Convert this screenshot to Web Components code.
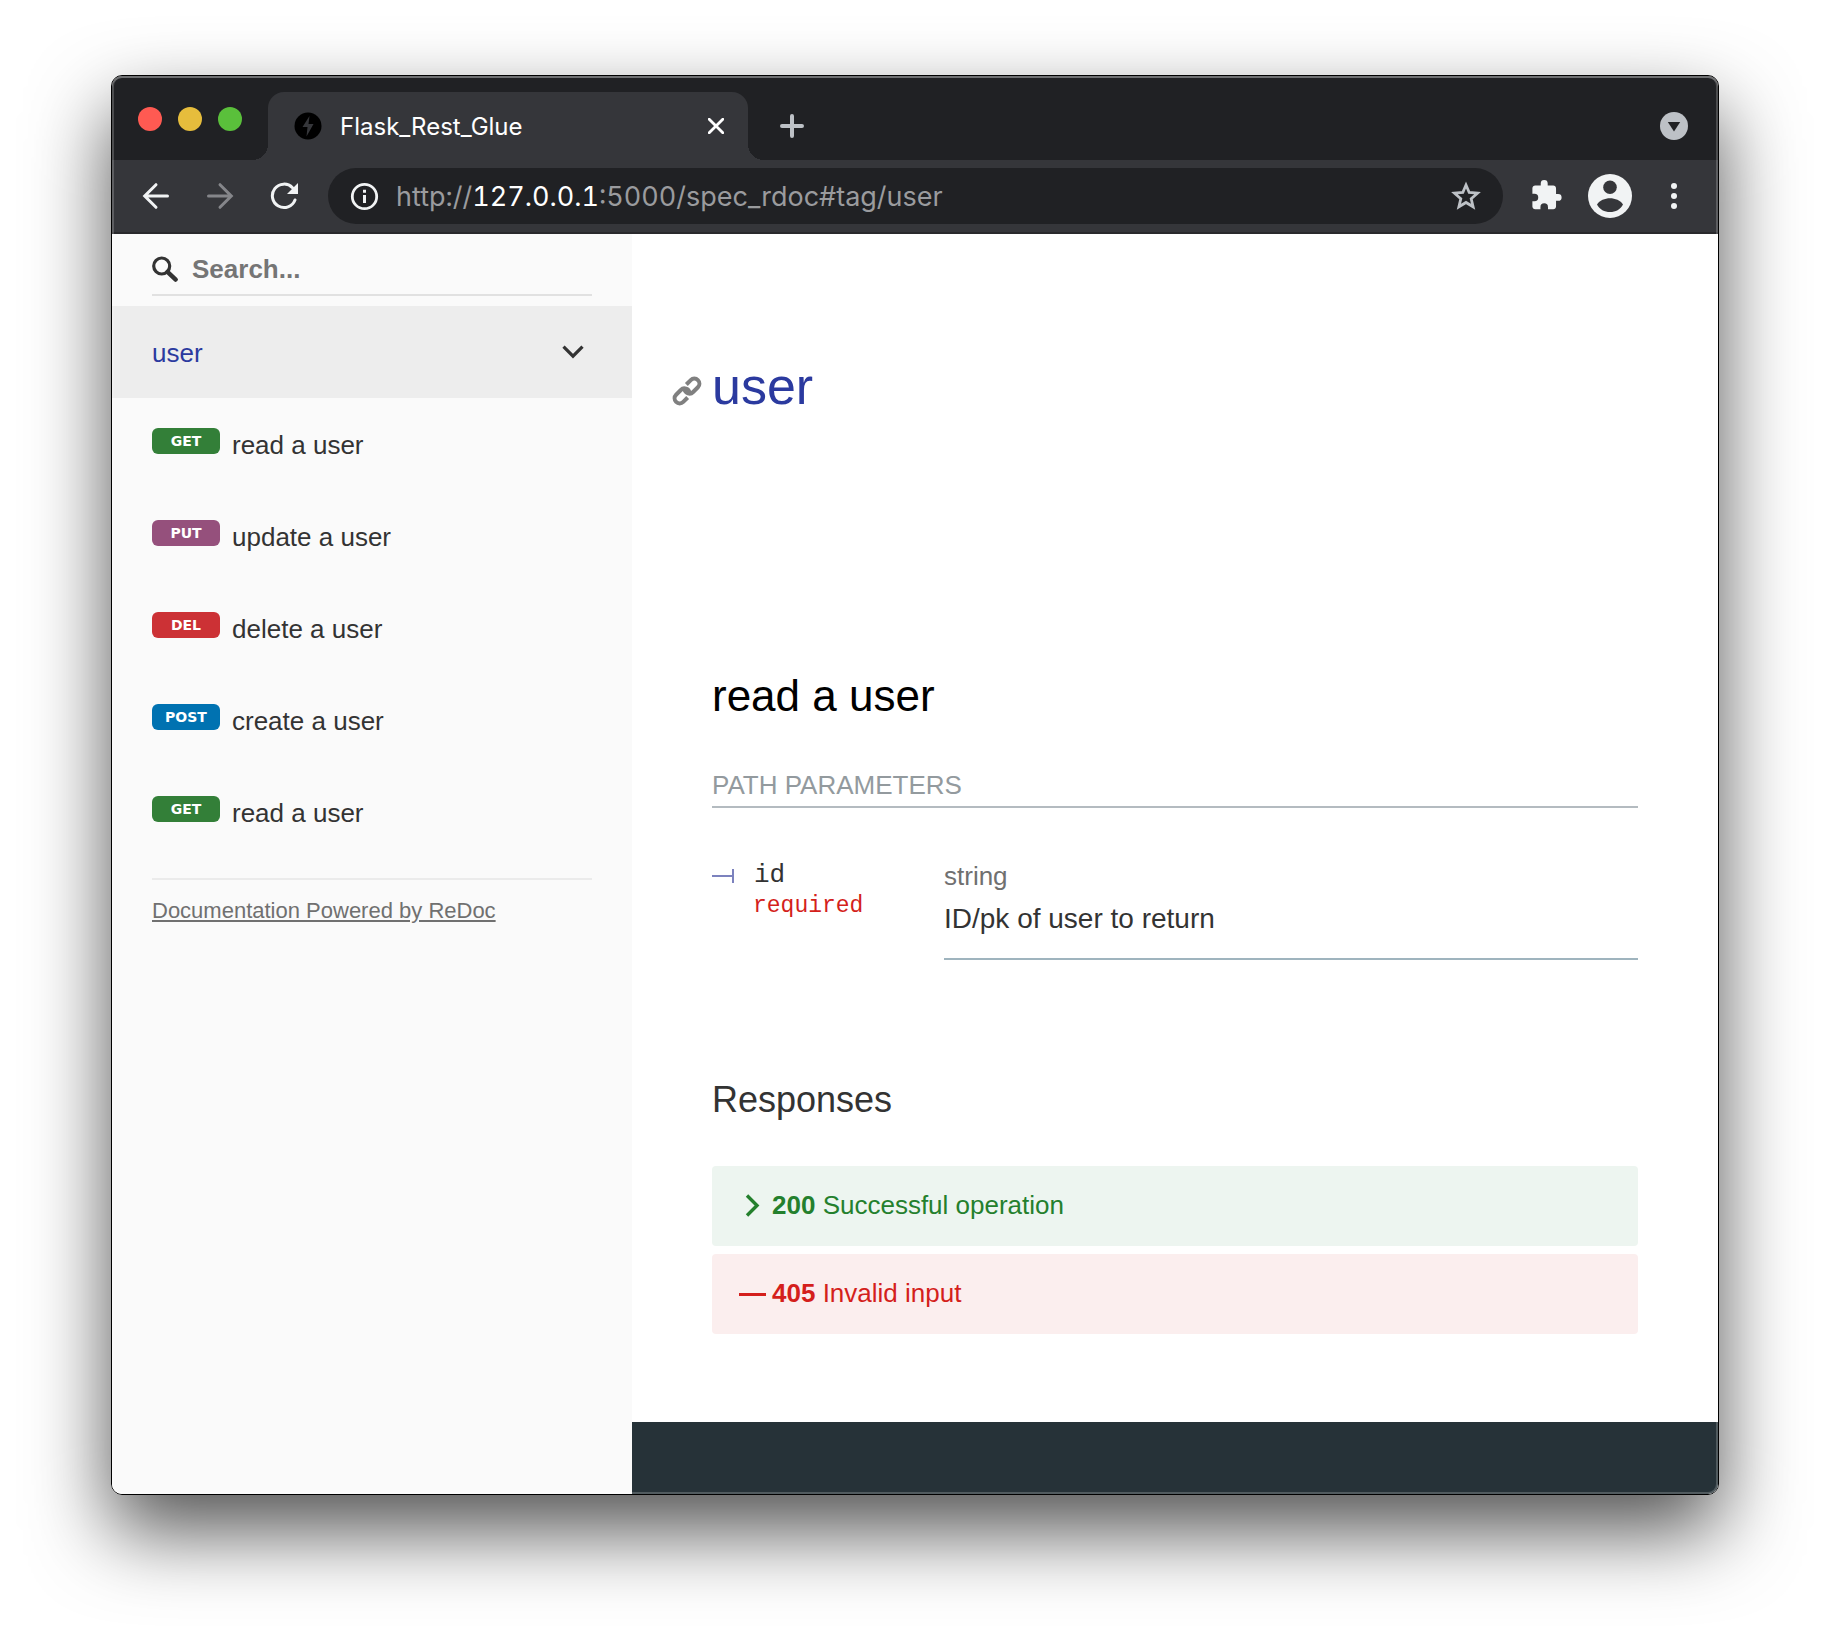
<!DOCTYPE html>
<html lang="en">
<head>
<meta charset="utf-8">
<meta name="viewport" content="width=device-width, initial-scale=1">
<title>Flask_Rest_Glue</title>
<style>
  body { margin: 0; background: #fff; font-family: "Liberation Sans", Arial, sans-serif; }
</style>
</head>
<body>
<browser-window>
  <browser-tabs slot="chrome" label="Flask_Rest_Glue"></browser-tabs>
  <browser-toolbar slot="chrome"></browser-toolbar>
  <doc-sidebar slot="side">
    <menu-entry verb="get">read a user</menu-entry>
    <menu-entry verb="put">update a user</menu-entry>
    <menu-entry verb="del">delete a user</menu-entry>
    <menu-entry verb="post">create a user</menu-entry>
    <menu-entry verb="get">read a user</menu-entry>
  </doc-sidebar>
  <doc-content>
    <response-row slot="responses" kind="ok" code="200">Successful operation</response-row>
    <response-row slot="responses" kind="error" code="405">Invalid input</response-row>
  </doc-content>
</browser-window>

<script>
function define(name, render) {
  customElements.define(name, class extends HTMLElement {
    constructor() {
      super();
      this.attachShadow({ mode: 'open' });
    }
    connectedCallback() {
      this.shadowRoot.innerHTML = '<style>*{box-sizing:border-box}svg{display:block;flex:none}button{border:0;padding:0;background:none;font:inherit;color:inherit;cursor:pointer}</style>' + render(this);
    }
  });
}

define('browser-window', () => `
<style>
  :host { display: flex; box-sizing: border-box; min-height: 100vh; padding: 75px 111px 147px; }
  .window { position: relative; flex: 1; min-width: 0; display: flex; flex-direction: column; overflow: hidden;
    border: 1px solid #000; border-radius: 11px; background: #fff; }
  .shade { flex: 1; min-width: 0; display: flex; border-radius: 11px;
    box-shadow: 0 36px 80px rgba(0,0,0,.68); }
  .rim { position: absolute; inset: 0; border-radius: 10px; pointer-events: none;
    box-shadow: inset 0 2px 0 rgba(255,255,255,.2), inset 0 0 0 2px rgba(255,255,255,.2); }
  .page { flex: 1; display: flex; }
</style>
<div class="shade"><div class="window">
  <slot name="chrome"></slot>
  <div class="page"><slot name="side"></slot><slot></slot></div>
  <div class="rim"></div>
</div></div>`);

define('browser-tabs', el => `
<style>
  :host { display: flex; align-items: flex-end; height: 84px; background: #202124; color: #fff; font: 24px Inter, sans-serif; }
  .lights { display: flex; gap: 16px; padding: 0 26px 29px 26px; }
  .lights button { width: 24px; height: 24px; border-radius: 50%; background: var(--c); }
  .tab { position: relative; display: flex; align-items: center; width: 480px; height: 68px; padding: 0 24px 0 26px;
    background: #35363a; border-radius: 16px 16px 0 0; }
  .tab::before, .tab::after { content: ""; position: absolute; bottom: 0; width: 16px; height: 16px; }
  .tab::before { right: 100%; background: radial-gradient(circle at 0 0, transparent 16px, #35363a 16px); }
  .tab::after { left: 100%; background: radial-gradient(circle at 100% 0, transparent 16px, #35363a 16px); }
  .title { flex: 1; padding-left: 18px; }
  .new { margin: 0 auto 22px 32px; }
  .more { margin: 0 30px 20px 0; }
</style>
<div class="lights">
  <button aria-label="Close window" style="--c:#ff5a52"></button>
  <button aria-label="Minimise window" style="--c:#e6bd3c"></button>
  <button aria-label="Zoom window" style="--c:#5ac03b"></button>
</div>
<div class="tab">
  <svg width="28" height="28" viewBox="0 0 28 28"><circle cx="14" cy="14" r="13.5" fill="#000"/><path d="M15.5 4 8.5 15h5l-1 9.5L19.500 12h-5z" fill="#35363a"/></svg>
  <span class="title">${el.getAttribute('label')}</span>
  <button aria-label="Close tab"><svg width="16" height="16" viewBox="0 0 16 16"><path d="m1.200 1.200 13.600 13.600M14.800 1.200 1.200 14.800" stroke="#fff" stroke-width="2.800" stroke-linecap="round"/></svg></button>
</div>
<button class="new" aria-label="New tab"><svg width="24" height="24" viewBox="0 0 24 24"><path d="M12 2v20M2 12h20" stroke="#bdc1c6" stroke-width="4" stroke-linecap="round"/></svg></button>
<button class="more" aria-label="Search tabs"><svg width="28" height="28" viewBox="0 0 28 28"><circle cx="14" cy="14" r="14" fill="#bdc1c6"/><path d="M7.800 10h12.400L14 19.500z" fill="#202124"/></svg></button>`);

define('browser-toolbar', () => `
<style>
  :host { display: flex; align-items: center; height: 74px; padding: 0 41px 0 30px; background: #35363a; color: #9a9b9e;
    border-bottom: 2px solid #29292c; box-sizing: border-box; font: 27px Inter, sans-serif; font-variant-numeric: tabular-nums; }
  .nav { display: flex; gap: 36px; padding-right: 30px; }
  .bar { flex: 1; min-width: 0; display: flex; align-items: center; height: 56px; padding: 0 21px 0 22px; border-radius: 28px; background: #202124; }
  .url { flex: 1; padding-left: 17px; white-space: nowrap; }
  .url b { font-weight: 400; color: #fff; }
  .tools { display: flex; align-items: center; padding-left: 28px; }
  .tools .me { margin: 0 39px 0 25px; }
</style>
<div class="nav">
  <button aria-label="Back"><svg width="28" height="28" viewBox="0 0 28 28"><path d="M25.500 14H3M14 2.700 2.700 14 14 25.300" fill="none" stroke="#f1f3f4" stroke-width="3" stroke-linecap="round"/></svg></button>
  <button aria-label="Forward"><svg width="28" height="28" viewBox="0 0 28 28"><path d="M2.500 14H25M14 2.700 25.300 14 14 25.300" fill="none" stroke="#85868a" stroke-width="3" stroke-linecap="round"/></svg></button>
  <button aria-label="Reload"><svg width="28" height="28" viewBox="0 0 28 28"><path d="M25 18a11.700 11.700 0 1 1-2.500-12.300" fill="none" stroke="#f1f3f4" stroke-width="3" stroke-linecap="round"/><path d="M28 1v11H17z" fill="#f1f3f4"/></svg></button>
</div>
<div class="bar">
  <svg width="29" height="29" viewBox="0 0 29 29"><circle cx="14.500" cy="14.500" r="12.200" fill="none" stroke="#f1f3f4" stroke-width="2.800"/><path d="M13 13h3v8h-3zM13 7.800h3v3h-3z" fill="#f1f3f4"/></svg>
  <span class="url">http://<b>127.0.0.1</b>:5000/spec_rdoc#tag/user</span>
  <button aria-label="Bookmark this page"><svg width="32" height="32" viewBox="0 0 32 32"><path d="m16 5 3.200 7.500 8.300.7-6.300 5.500 1.900 8.100L16 22.500l-7.100 4.300 1.900-8.100-6.300-5.500 8.300-.7z" fill="none" stroke="#bdc1c6" stroke-width="2.800"/></svg></button>
</div>
<div class="tools">
  <button aria-label="Extensions"><svg width="32" height="32" viewBox="1 1 23 23"><path d="M20.500 11H19V7c0-1.100-.9-2-2-2h-4V3.500a2.500 2.500 0 0 0-5 0V5H4c-1.100 0-2 .9-2 2v3.800h1.500a2.700 2.700 0 0 1 0 5.400H2V20c0 1.100.9 2 2 2h3.800v-1.500a2.700 2.700 0 0 1 5.400 0V22H17c1.100 0 2-.9 2-2v-4h1.500a2.500 2.500 0 0 0 0-5z" fill="#f1f3f4"/></svg></button>
  <button class="me" aria-label="Profile"><svg width="44" height="44" viewBox="0 0 44 44"><circle cx="22" cy="22" r="22" fill="#f1f3f4"/><circle cx="22" cy="13.300" r="6.800" fill="#35363a"/><path d="M9 30.500C11.500 26.500 17 24.300 22 24.300s10.500 2.200 13 6.200C32.500 35.500 27.500 38 22 38S11.500 35.500 9 30.500z" fill="#35363a"/></svg></button>
  <button aria-label="Menu"><svg width="6" height="28" viewBox="0 0 6 28"><g fill="#f1f3f4"><circle cx="3" cy="4" r="3"/><circle cx="3" cy="14" r="3"/><circle cx="3" cy="24" r="3"/></g></svg></button>
</div>`);

define('doc-sidebar', () => `
<style>
  :host { display: block; flex: none; box-sizing: border-box; width: 520px; background: #fafafa; color: #333; font-size: 26px; line-height: 42px; }
  .search { display: flex; align-items: center; gap: 13px; height: 62px; margin: 0 40px 10px; padding-top: 10px; border-bottom: 2px solid #e1e1e1; }
  input { flex: 1; min-width: 0; border: 0; padding: 0; outline: 0; background: none; font: bold 26px "Liberation Sans", Arial, sans-serif; color: #333; }
  input::placeholder { color: #757575; opacity: 1; }
  .group { display: flex; align-items: center; justify-content: space-between; width: 100%; padding: 26px 48px 24px 40px; background: #ededed; color: #2b3a9f; text-align: left; }
  footer { margin: 20px 40px 0; padding-top: 10px; border-top: 2px solid #ebebeb; font-size: 22px; }
  footer a { color: #707070; text-decoration-thickness: 2px; text-underline-offset: 2px; }
</style>
<label class="search">
  <svg width="27" height="27" viewBox="0 0 27 27"><circle cx="9.700" cy="10" r="8" fill="none" stroke="#333" stroke-width="3.200"/><path d="m15.500 15.800 8.200 7.800" stroke="#333" stroke-width="4.400" stroke-linecap="round"/></svg>
  <input type="search" placeholder="Search..." aria-label="Search">
</label>
<button class="group" aria-expanded="true">user
  <svg width="22" height="18" viewBox="0 0 22 18"><path d="m1.500 2.700 9.500 9.500 9.500-9.500" fill="none" stroke="#333" stroke-width="3.200"/></svg>
</button>
<nav><slot></slot></nav>
<footer><a href="#redoc">Documentation Powered by ReDoc</a></footer>`);

define('menu-entry', el => `
<style>
  :host { display: block; }
  a { display: flex; align-items: flex-start; gap: 12px; padding: 26px 40px 24px; color: #333; text-decoration: none; }
  .verb { width: 68px; height: 26px; margin-top: 4px; border-radius: 6px; color: #fff; text-align: center;
    font: bold 14px/26px "DejaVu Sans", Verdana, sans-serif; text-transform: uppercase; }
  .get { background: #337f38; } .put { background: #95507c; } .del { background: #cc3135; } .post { background: #0072b1; }
</style>
<a href="#${el.getAttribute('verb')}"><span class="verb ${el.getAttribute('verb')}">${el.getAttribute('verb')}</span><slot></slot></a>`);

define('doc-content', () => `
<style>
  :host { display: flex; flex-direction: column; flex: 1; min-width: 0; background: #fff; color: #333; }
  section { padding: 122px 80px 88px; }
  h1, h2, h3, h4 { margin: 0; font-weight: 400; }
  h1 { display: flex; align-items: center; gap: 10px; margin-left: -40px; font-size: 52px; line-height: 60px; color: #2b3a9f; }
  h1 a { padding-top: 10px; }
  h2 { margin: 254px 0 42px; font-size: 44px; line-height: 52px; color: #000; }
  h4 { border-bottom: 2px solid #b4bbc0; font-size: 26px; line-height: 42px; color: #939a9e; text-transform: uppercase; }
  table { width: 100%; margin: 47px 0 118px; border-collapse: collapse; }
  th, td { padding: 0; text-align: left; vertical-align: top; font-weight: 400; }
  th { width: 232px; padding-top: 2px; font: 26px/36px "Liberation Mono", monospace; }
  .name { display: flex; align-items: center; gap: 18px; }
  .req { padding-left: 41px; font-size: 23px; line-height: 26px; color: #d41f1c; }
  td { padding-bottom: 18px; border-bottom: 2px solid #9fb4be; font-size: 28px; line-height: 43px; }
  .type { font-size: 26px; line-height: 42px; color: #707070; }
  h3 { margin-bottom: 44px; font-size: 36px; line-height: 44px; }
  .list { display: grid; gap: 8px; }
  .samples { flex: 1; min-height: 72px; background: #263238; }
</style>
<section>
  <h1><a href="#tag/user" aria-label="Link to user"><svg width="30" height="30" viewBox="-14.500 -14.500 29 29"><g transform="rotate(-45)" fill="none" stroke="#808080" stroke-width="3.900"><path d="M-4 4.900H-10a4.900 4.900 0 0 1 0-9.800h6.500a4.900 4.900 0 0 1 4 7.800"/><path d="M4-4.900H10a4.900 4.900 0 0 1 0 9.800h-6.500a4.900 4.900 0 0 1-4-7.800"/></g></svg></a>user</h1>
  <h2>read a user</h2>
  <h4>Path Parameters</h4>
  <table><tbody><tr>
    <th scope="row">
      <div class="name"><svg width="24" height="16" viewBox="0 0 24 16"><path d="M0 9h22M21 2v14" stroke="#7c82be" stroke-width="2"/></svg>id</div>
      <div class="req">required</div>
    </th>
    <td><div class="type">string</div><div>ID/pk of user to return</div></td>
  </tr></tbody></table>
  <h3>Responses</h3>
  <div class="list"><slot name="responses"></slot></div>
</section>
<div class="samples"></div>`);

define('response-row', el => {
  const ok = el.getAttribute('kind') === 'ok';
  const mark = ok
    ? '<path d="m8 1.500 10 10-10 10" fill="none" stroke="currentColor" stroke-width="3.400"/>'
    : '<path d="M0 12.500h27" stroke="currentColor" stroke-width="3"/>';
  return `
<style>
  :host { display: block; }
  button { display: flex; align-items: center; gap: 6px; width: 100%; padding: 18px 27px 20px; border-radius: 4px; font-size: 26px; line-height: 42px; text-align: left; }
  .ok { background: #edf5f0; color: #24802d; }
  .error { background: #fbeeee; color: #d41f1c; }
</style>
<button class="${el.getAttribute('kind')}"><svg width="27" height="23" viewBox="0 0 27 23">${mark}</svg><span><strong>${el.getAttribute('code')}</strong> <slot></slot></span></button>`;
});
</script>
</body>
</html>
